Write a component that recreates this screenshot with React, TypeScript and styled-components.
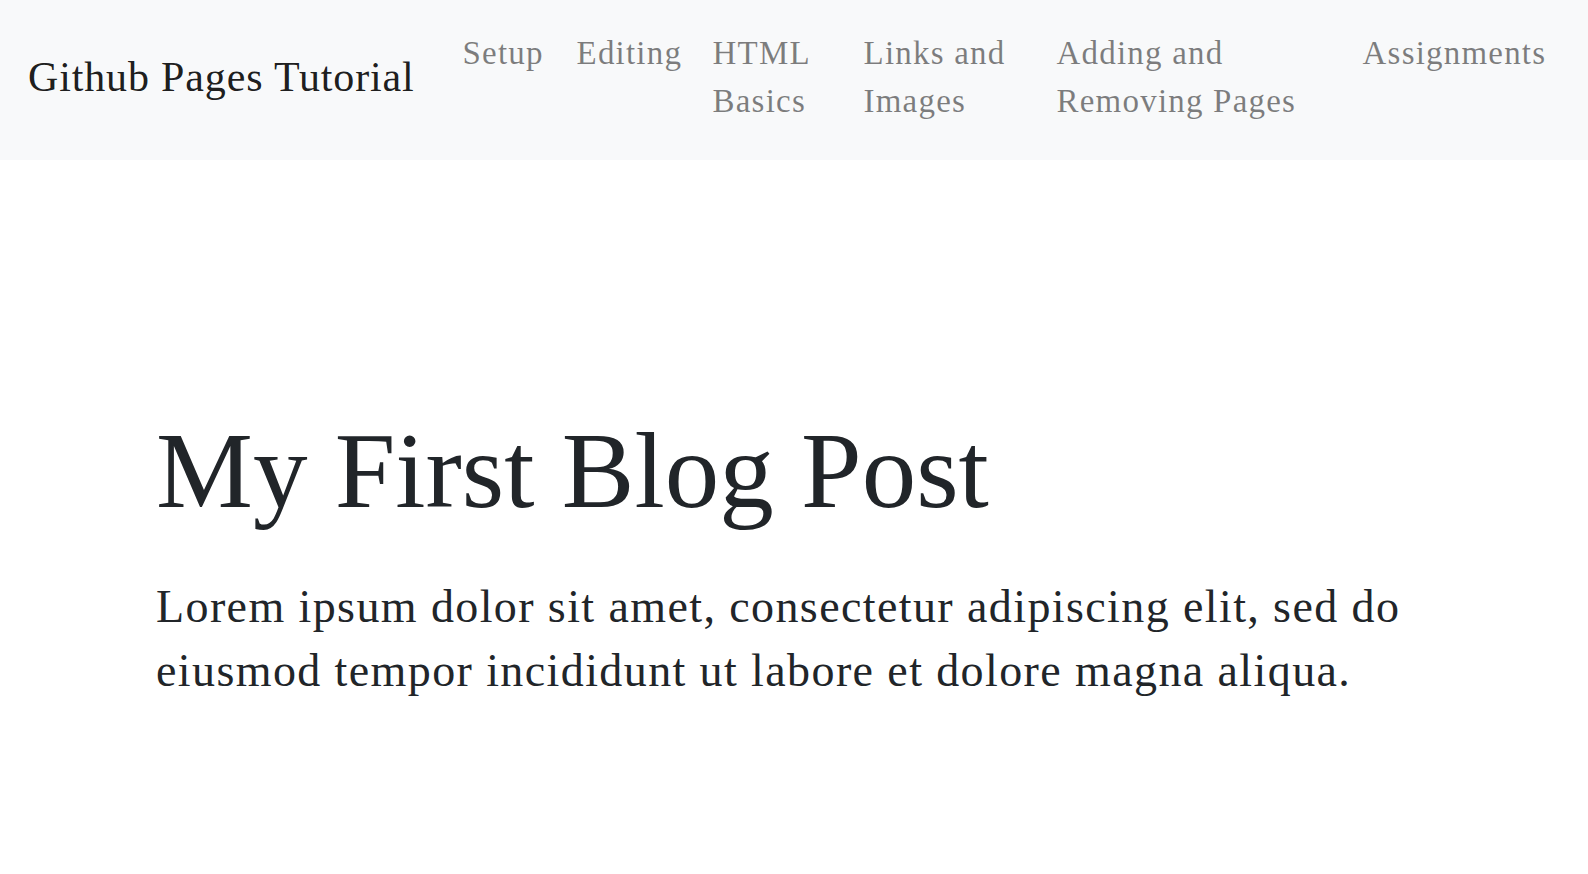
import React from "react";
import styled, { createGlobalStyle } from "styled-components";

const GlobalStyle = createGlobalStyle`
  html, body {
    margin: 0;
    padding: 0;
    background: #ffffff;
  }
  body {
    font-family: "Liberation Serif", "Times New Roman", serif;
    color: #212529;
  }
  * { box-sizing: border-box; }
`;

const Navbar = styled.nav`
  display: flex;
  align-items: stretch;
  background: #f8f9fa;
  padding: 16px 28px;
`;

const Brand = styled.a`
  align-self: center;
  flex: 0 0 auto;
  margin-right: 32px;
  padding: 7px 0 13px;
  font-size: 42px;
  line-height: 63px;
  letter-spacing: 0.85px;
  color: rgba(0, 0, 0, 0.9);
  text-decoration: none;
  white-space: nowrap;
`;

const NavList = styled.ul`
  display: flex;
  align-items: stretch;
  list-style: none;
  margin: 0;
  padding: 0;
`;

const NavItem = styled.li<{ $w: number }>`
  flex: 0 0 ${(p) => p.$w}px;
  width: ${(p) => p.$w}px;
`;

const NavLink = styled.a`
  display: block;
  padding: 13px 16px 19px;
  font-size: 33px;
  line-height: 48px;
  letter-spacing: 1.2px;
  color: rgba(0, 0, 0, 0.5);
  text-decoration: none;
`;

const Main = styled.main`
  padding: 246px 156px 0;
`;

const Title = styled.h1`
  margin: 0 0 38px;
  font-size: 109px;
  font-weight: 400;
  line-height: 1.2;
  color: #212529;
`;

const Lead = styled.p`
  margin: 0;
  max-width: 1280px;
  font-size: 46px;
  line-height: 64px;
  letter-spacing: 1.4px;
  color: #212529;
`;

const links = [
  { label: "Setup", w: 114 },
  { label: "Editing", w: 136 },
  { label: "HTML Basics", w: 151 },
  { label: "Links and Images", w: 193 },
  { label: "Adding and Removing Pages", w: 306 },
  { label: "Assignments", w: 212 },
];

export default function App() {
  return (
    <>
      <GlobalStyle />
      <Navbar>
        <Brand href="#">Github Pages Tutorial</Brand>
        <NavList>
          {links.map((l) => (
            <NavItem key={l.label} $w={l.w}>
              <NavLink href="#">{l.label}</NavLink>
            </NavItem>
          ))}
        </NavList>
      </Navbar>
      <Main>
        <Title>My First Blog Post</Title>
        <Lead>
          Lorem ipsum dolor sit amet, consectetur adipiscing elit, sed do
          eiusmod tempor incididunt ut labore et dolore magna aliqua.
        </Lead>
      </Main>
    </>
  );
}
